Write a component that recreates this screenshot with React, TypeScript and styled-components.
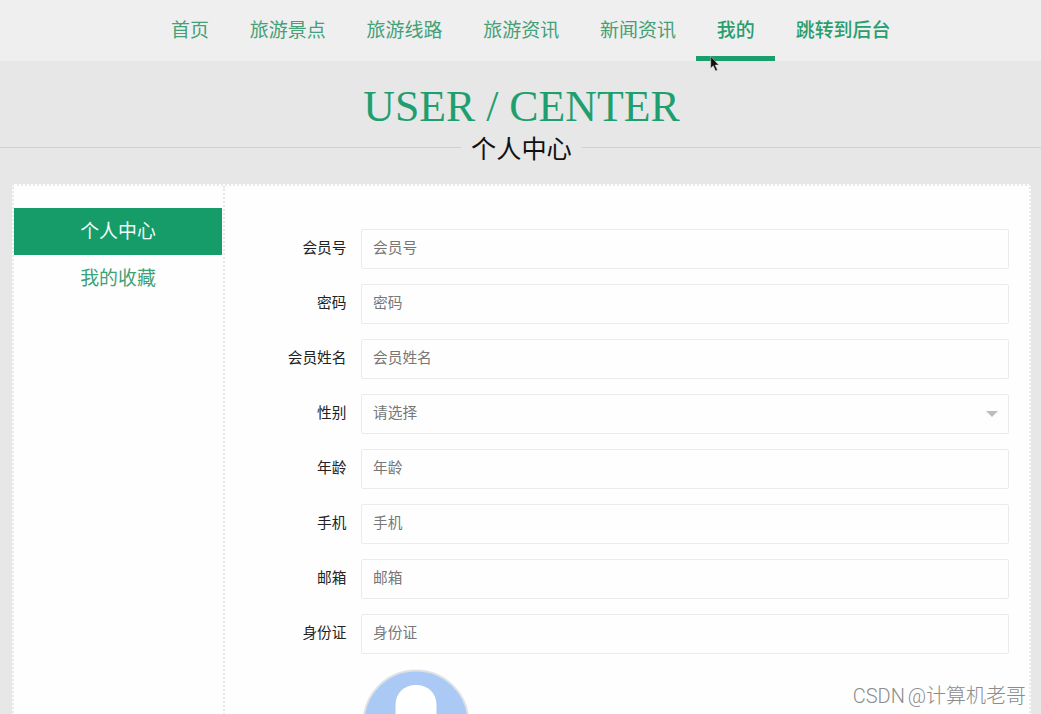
import React from "react";
import styled, { createGlobalStyle } from "styled-components";

const sans = `"Noto Sans CJK SC", sans-serif`;

const GlobalStyle = createGlobalStyle`
  * { box-sizing: border-box; }
  html, body { margin: 0; padding: 0; }
  body { background: #e7e7e7; font-family: ${sans}; overflow: hidden; }
`;

const Page = styled.div`
  position: relative;
  width: 1041px;
  height: 714px;
  overflow: hidden;
  background: #e7e7e7;
`;

const Nav = styled.nav`
  display: flex;
  height: 60.5px;
  padding-left: 150.5px;
  background: #efefef;
`;

const NavItem = styled.a<{ $active?: boolean; $strong?: boolean }>`
  flex: none;
  height: 60.5px;
  padding: 0 20.45px;
  border-bottom: 5px solid ${(p) => (p.$active ? "#1a9f6c" : "transparent")};
  color: ${(p) => (p.$strong ? "#2a9d6d" : "#43a077")};
  font-size: 18.98px;
  font-weight: ${(p) => (p.$strong ? 500 : 400)};
  line-height: 57px;
  white-space: nowrap;
`;

const Heading = styled.header`
  display: flex;
  flex-direction: column;
  align-items: center;
  height: 123.5px;
  padding: 20.5px 0 0 2px;
`;

const Title = styled.h1`
  margin: 0;
  color: #1f9f6f;
  font: 400 43.8px/50px "Liberation Serif", serif;
  white-space: nowrap;
`;

const SubtitleRow = styled.div`
  display: flex;
  align-items: center;
  gap: 10px;
  width: calc(100% + 2px);
  height: 32px;
  margin-left: -2px;

  &::before,
  &::after {
    content: "";
    flex: 1;
    height: 1px;
    background: #d0d0d0;
  }

  &::before {
    flex: none;
    width: 461px;
  }
`;

const Subtitle = styled.h2`
  margin: 0;
  padding-bottom: 1px;
  color: #111;
  font-size: 25.2px;
  font-weight: 400;
  line-height: 32px;
`;

const Panel = styled.main`
  display: flex;
  width: 1019px;
  height: 700px;
  margin-left: 12px;
  border: 2px dotted #e9e9e9;
  background: #fefefe;
`;

const Sidebar = styled.aside`
  flex: none;
  width: 211px;
  padding-top: 22px;
  border-right: 2px dotted #e6e6e6;
`;

const SideItem = styled.a<{ $active?: boolean }>`
  display: block;
  width: 208px;
  height: 46.5px;
  background: ${(p) => (p.$active ? "#159c68" : "transparent")};
  color: ${(p) => (p.$active ? "#f2fbf7" : "#3fa176")};
  font-size: 18.9px;
  line-height: 43px;
  text-align: center;
`;

const Form = styled.form`
  flex: 1;
  padding: 43px 20px 0 0;
`;

const Row = styled.div`
  display: flex;
  height: 39.5px;
  margin-bottom: 15.55px;
`;

const Label = styled.label`
  width: 136px;
  padding-right: 14.5px;
  color: #222;
  font-size: 14.7px;
  line-height: 36px;
  text-align: right;
`;

const Field = styled.div`
  display: flex;
  flex: 1;
  justify-content: space-between;
  padding: 0 10px 0 11px;
  border: 1px solid #ebebeb;
  border-radius: 2px;
  color: #777;
  font-size: 14.7px;
  line-height: 34px;
`;

const Caret = styled.span`
  align-self: center;
  border: 6px solid transparent;
  border-top-color: #bdbdbd;
  border-bottom: 0;
`;

const Avatar = styled.svg`
  display: block;
  margin-left: 136px;
`;

const Watermark = styled.div`
  position: absolute;
  right: 15px;
  bottom: 3px;
  color: #8c8c8c;
  font-family: Roboto, ${sans};
  font-size: 20px;
  font-weight: 300;
  line-height: 30px;
  white-space: nowrap;
  word-spacing: -2px;
`;

const Cursor = styled.svg`
  position: absolute;
  left: 710px;
  top: 55px;
`;

const links = ["首页", "旅游景点", "旅游线路", "旅游资讯", "新闻资讯", "我的", "跳转到后台"];
const fields = ["会员号", "密码", "会员姓名", "性别", "年龄", "手机", "邮箱", "身份证"];

export default function App() {
  return (
    <Page>
      <GlobalStyle />
      <Nav>
        {links.map((text, i) => (
          <NavItem key={text} $active={text === "我的"} $strong={i >= 5}>
            {text}
          </NavItem>
        ))}
      </Nav>
      <Heading>
        <Title>USER / CENTER</Title>
        <SubtitleRow>
          <Subtitle>个人中心</Subtitle>
        </SubtitleRow>
      </Heading>
      <Panel>
        <Sidebar>
          <SideItem $active>个人中心</SideItem>
          <SideItem>我的收藏</SideItem>
        </Sidebar>
        <Form>
          {fields.map((name) => (
            <Row key={name}>
              <Label>{name}</Label>
              <Field>
                <span>{name === "性别" ? "请选择" : name}</span>
                {name === "性别" && <Caret />}
              </Field>
            </Row>
          ))}
          <Avatar width="110" height="110" viewBox="0 0 110 110">
            <circle cx="55" cy="54" r="52.5" fill="#abc9f5" stroke="#dde2e8" strokeWidth="2" />
            <path d="M34.5 42V36C34.5 24 43 16 55 16S75.5 24 75.5 36V42C75.5 54 67 62 55 62S34.5 54 34.5 42Z" fill="#fff" />
          </Avatar>
        </Form>
      </Panel>
      <Watermark>CSDN @计算机老哥</Watermark>
      <Cursor width="10" height="18" viewBox="0 0 10 17">
        <path d="M.7.8v12l2.5-2.5 2.4 5.2 1.9-.9-2.4-5h3.6z" fill="#111" stroke="#ddd" strokeWidth=".5" />
      </Cursor>
    </Page>
  );
}
